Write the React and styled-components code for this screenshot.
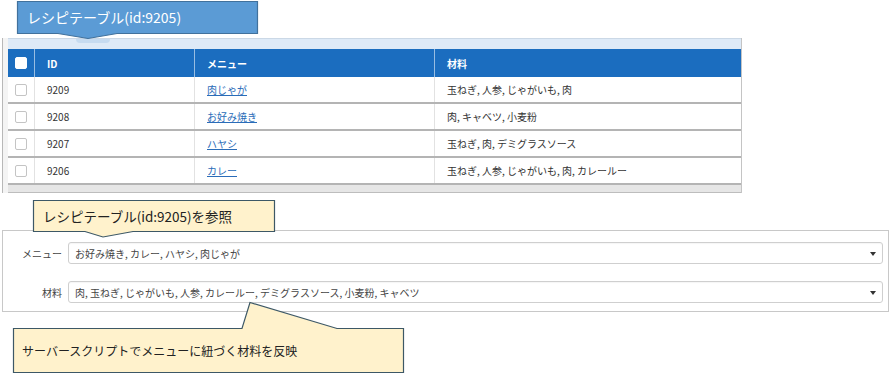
import React from 'react'
import styled, { createGlobalStyle } from 'styled-components'

const Global = createGlobalStyle`
  *,
  *::before,
  *::after {
    margin: 0;
    padding: 0;
    box-sizing: border-box;
  }

  body {
    font-family: "Noto Sans CJK JP", "Noto Sans", sans-serif;
    color: #333;
    background: #fff;
  }
`

const Page = styled.div`
  position: relative;
  width: 890px;
  height: 373px;
  overflow: hidden;
  padding-top: 38px;
`

const TablePanel = styled.div`
  margin-left: 2px;
  width: 740px;
  border-left: 1px solid #b8b8b8;
  border-right: 1px solid #c4c4c4;
  padding-left: 5px;
  background: #f4f4f4;
`

const TopStrip = styled.div`
  height: 11px;
  background: #deeaf7;
  border-top: 1px solid #cbd8e6;
`

const Tab = styled.div`
  margin-left: 68px;
  width: 34px;
  height: 4px;
  background: #c6dbf0;
  border-radius: 0 0 4px 4px;
`

const cols = '27px 160px 240px 1fr'

const HeaderRow = styled.div`
  display: grid;
  grid-template-columns: ${cols};
  height: 28px;
  background: #1b6dbf;
  color: #fff;
  font-size: 10px;
  font-weight: bold;
`

const HeadCell = styled.div`
  display: flex;
  align-items: center;
  padding-left: ${p => (p.$box ? '7px' : '12px')};
  border-right: 1px solid rgba(255, 255, 255, 0.55);

  &:last-child {
    border-right: none;
  }
`

const Row = styled.div`
  display: grid;
  grid-template-columns: ${cols};
  height: 27px;
  background: #fff;
  border-bottom: 2px solid #b4b4b4;
  font-size: 10px;
`

const Cell = styled.div`
  display: flex;
  align-items: center;
  padding-left: ${p => (p.$box ? '7px' : '12px')};
  border-right: 1px solid #e2e2e2;
  white-space: nowrap;

  &:last-child {
    border-right: none;
  }
`

const Check = styled.span`
  width: 12px;
  height: 12px;
  border-radius: 2px;
  background: #fff;
  border: 1px solid ${p => (p.$head ? '#fff' : '#c4c4c4')};
`

const Link = styled.a`
  color: #2a6cb8;
  text-decoration: underline;
  cursor: pointer;
`

const BottomStrip = styled.div`
  height: 8px;
  background: #e6e6e6;
  border-bottom: 1px solid #bdbdbd;
`

const FormPanel = styled.div`
  margin: 37px 0 0 2px;
  width: 887px;
  border: 1px solid #c8c8c8;
  padding: 11px 5px 8px 0;
  display: flex;
  flex-direction: column;
  gap: 17px;
`

const Field = styled.div`
  display: grid;
  grid-template-columns: 60px 1fr;
  column-gap: 5px;
  align-items: center;
`

const Label = styled.label`
  text-align: right;
  padding-right: 1px;
  font-size: 10px;
  color: #444;
`

const Select = styled.div`
  position: relative;
  height: 22px;
  display: flex;
  align-items: center;
  padding-left: 6px;
  border: 1px solid #cfcfcf;
  border-radius: 3px;
  box-shadow: inset 0 1px 1px rgba(0, 0, 0, 0.04);
  font-size: 10px;
  color: #444;

  &::after {
    content: '';
    position: absolute;
    right: 6px;
    top: 9px;
    border-left: 3.5px solid transparent;
    border-right: 3.5px solid transparent;
    border-top: 4px solid #333;
  }
`

const CalloutBox = styled.div`
  position: absolute;
  left: ${p => p.$x}px;
  top: ${p => p.$y}px;
  width: ${p => p.$w}px;
  height: ${p => p.$h}px;
`

const CalloutShape = styled.svg`
  position: absolute;
  inset: 0;
  overflow: visible;
`

const CalloutText = styled.div`
  position: absolute;
  left: ${p => p.$tx}px;
  top: ${p => p.$ty}px;
  height: ${p => p.$th}px;
  display: flex;
  align-items: center;
  white-space: nowrap;
  font-size: ${p => p.$size}px;
  color: ${p => p.$color};
`

function Callout({ x, y, w, h, d, fill, stroke, text, tx, ty, th, size, color }) {
  return (
    <CalloutBox $x={x} $y={y} $w={w} $h={h}>
      <CalloutShape width={w} height={h}>
        <path d={d} fill={fill} stroke={stroke} strokeWidth="1.2" />
      </CalloutShape>
      <CalloutText $tx={tx} $ty={ty} $th={th} $size={size} $color={color}>
        {text}
      </CalloutText>
    </CalloutBox>
  )
}

const recipes = [
  { id: 9209, menu: '肉じゃが', items: '玉ねぎ, 人参, じゃがいも, 肉' },
  { id: 9208, menu: 'お好み焼き', items: '肉, キャベツ, 小麦粉' },
  { id: 9207, menu: 'ハヤシ', items: '玉ねぎ, 肉, デミグラスソース' },
  { id: 9206, menu: 'カレー', items: '玉ねぎ, 人参, じゃがいも, 肉, カレールー' },
]

export default function App() {
  return (
    <>
      <Global />
      <Page>
        <TablePanel>
          <TopStrip>
            <Tab />
          </TopStrip>
          <HeaderRow>
            <HeadCell $box><Check $head /></HeadCell>
            <HeadCell>ID</HeadCell>
            <HeadCell>メニュー</HeadCell>
            <HeadCell>材料</HeadCell>
          </HeaderRow>
          {recipes.map(r => (
            <Row key={r.id}>
              <Cell $box><Check /></Cell>
              <Cell>{r.id}</Cell>
              <Cell><Link>{r.menu}</Link></Cell>
              <Cell>{r.items}</Cell>
            </Row>
          ))}
          <BottomStrip />
        </TablePanel>

        <FormPanel>
          <Field>
            <Label>メニュー</Label>
            <Select>お好み焼き, カレー, ハヤシ, 肉じゃが</Select>
          </Field>
          <Field>
            <Label>材料</Label>
            <Select>肉, 玉ねぎ, じゃがいも, 人参, カレールー, デミグラスソース, 小麦粉, キャベツ</Select>
          </Field>
        </FormPanel>

        <Callout
          x={17} y={1} w={242} h={38}
          d="M0.5,0.5 H240.5 V32.5 H100 L71,37.5 L41,32.5 H0.5 Z"
          fill="#5b9bd5" stroke="#41719c"
          text="レシピテーブル(id:9205)"
          tx={10} ty={0} th={32} size={14} color="#fff"
        />
        <Callout
          x={33} y={200} w={243} h={38}
          d="M0.5,0.5 H241.5 V31.5 H100 L70,37 L52,31.5 H0.5 Z"
          fill="#fff2cc" stroke="#3d5866"
          text="レシピテーブル(id:9205)を参照"
          tx={10} ty={0} th={31} size={13.5} color="#222"
        />
        <Callout
          x={13} y={302} w={391} h={71}
          d="M0.5,26.5 H229 L237,0.5 L324,26.5 H390.5 V70.5 H0.5 Z"
          fill="#fff2cc" stroke="#3d5866"
          text="サーバースクリプトでメニューに紐づく材料を反映"
          tx={9} ty={26} th={44} size={12} color="#222"
        />
      </Page>
    </>
  )
}
